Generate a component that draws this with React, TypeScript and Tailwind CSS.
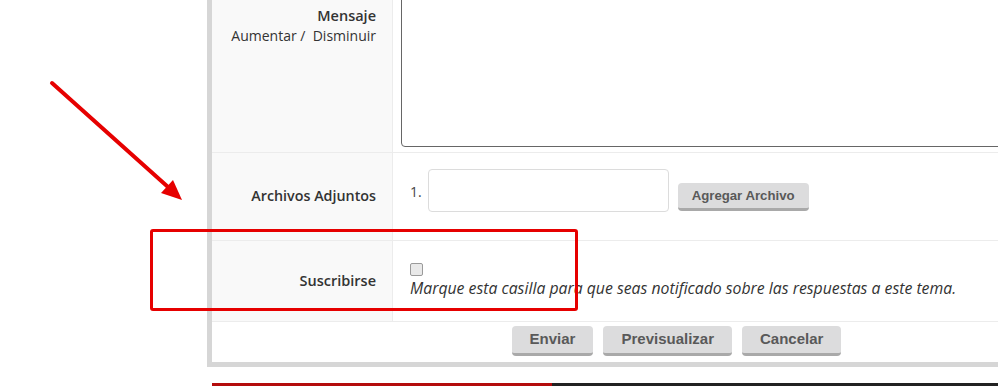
import React from 'react';

const Btn: React.FC<{ label: string; small?: boolean }> = ({ label, small }) => (
  <button
    className={
      'rounded-[4px] bg-[#dcdcdd] border-b-[3px] border-[#a9a9a9] font-bold text-[#595959] ' +
      (small ? 'h-[28px] px-[14px] text-[13.2px]' : 'h-[30px] px-[18px] text-[15px]')
    }
    style={{ fontFamily: '"Liberation Sans", Arial, sans-serif' }}
  >
    {label}
  </button>
);

const App: React.FC = () => {
  return (
    <div
      className="relative w-[998px] h-[386px] overflow-hidden bg-white text-[#333]"
      style={{ fontFamily: '"Open Sans", "DejaVu Sans", sans-serif' }}
    >
      {/* Form panel */}
      <div className="ml-[207px] -mt-[20px] w-[934px] border-l-[5px] border-b-[5px] border-[#d6d6d6] bg-white">
        {/* Mensaje */}
        <div className="flex h-[173px] border-b border-[#ececec]">
          <div className="w-[181px] shrink-0 bg-[#f9f9f9] border-r border-[#ececec] pt-[26px] pr-[16px] text-right">
            <div className="text-[14.5px] leading-[20px] font-semibold">Mensaje</div>
            <div className="text-[14px] leading-[20px]">Aumentar /&nbsp; Disminuir</div>
          </div>
          <div className="flex-1 pl-[8px] pt-[5px]">
            <div className="h-[162px] border border-[#666] rounded-bl-[4px] bg-white" />
          </div>
        </div>

        {/* Archivos Adjuntos */}
        <div className="flex h-[88px] border-b border-[#ececec]">
          <div className="w-[181px] shrink-0 bg-[#f9f9f9] border-r border-[#ececec] pr-[16px] pb-[2px] flex items-center justify-end text-[14.3px] font-semibold">
            Archivos Adjuntos
          </div>
          <div className="flex-1 flex items-start pl-[17px] pt-[16px]">
            <span className="mt-[12px] text-[14px] text-[#444] mr-[6px]">1.</span>
            <div className="w-[241px] h-[43px] rounded-[4px] border border-[#dcdcdc] bg-white" />
            <div className="ml-[9px] mt-[13px]">
              <Btn label="Agregar Archivo" small />
            </div>
          </div>
        </div>

        {/* Suscribirse */}
        <div className="flex h-[81px] border-b border-[#ececec]">
          <div className="w-[181px] shrink-0 bg-[#f9f9f9] border-r border-[#ececec] pr-[16px] flex items-center justify-end text-[14.5px] font-semibold">
            Suscribirse
          </div>
          <div className="flex-1 pl-[17px] pt-[22px]">
            <span className="block w-[13px] h-[13px] rounded-[2px] border border-[#9a9a9a] bg-[#e9e9e9] mb-[2px]" />
            <div className="text-[15.8px] leading-[20px] italic">
              Marque esta casilla para que seas notificado sobre las respuestas a este tema.
            </div>
          </div>
        </div>

        {/* Buttons */}
        <div className="flex justify-center gap-[10px] h-[40px] pt-[4px]">
          <Btn label="Enviar" />
          <Btn label="Previsualizar" />
          <Btn label="Cancelar" />
        </div>
      </div>

      {/* Footer bar */}
      <div className="ml-[212px] mt-[16px] flex h-[3px]">
        <div className="w-[340px] bg-[#b40c0c]" />
        <div className="flex-1 bg-[#222]" />
      </div>

      {/* Annotations */}
      <svg className="absolute left-0 top-0" width="200" height="210" viewBox="0 0 200 210">
        <line x1="52" y1="83" x2="168" y2="187" stroke="#e60000" strokeWidth="4" strokeLinecap="round" />
        <polygon points="182,200 161,193 173,180" fill="#e60000" />
      </svg>
      <div className="absolute left-[150px] top-[229px] w-[428px] h-[82px] border-[3px] border-[#e60000] rounded-[3px]" />
    </div>
  );
};

export default App;
